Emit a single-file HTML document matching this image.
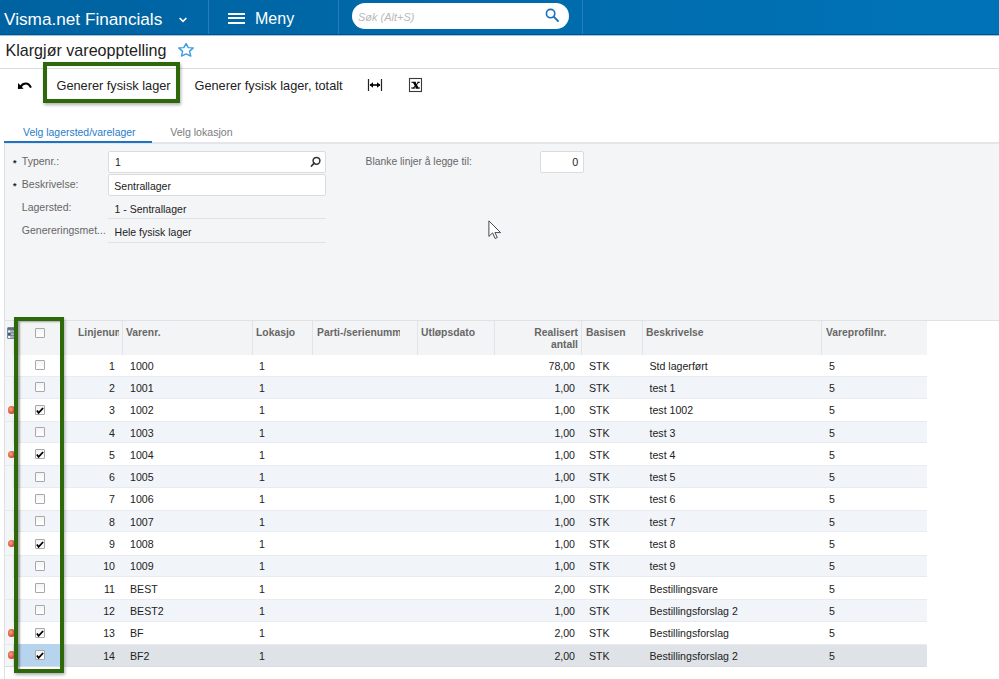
<!DOCTYPE html>
<html><head><meta charset="utf-8">
<style>
*{box-sizing:border-box;margin:0;padding:0}
html,body{width:999px;height:679px;overflow:hidden;background:#fff;font-family:"Liberation Sans",sans-serif;position:relative}
.a{position:absolute;white-space:nowrap}
#hdr{position:absolute;left:0;top:0;width:999px;height:35px;background:linear-gradient(90deg,#0062a1,#0068a7 35%,#0070b3 80%,#0073b8);border-bottom:1px solid #00528e}
.sep{position:absolute;top:0;width:1px;height:34px;background:#2a7dbd}
.t{position:absolute;white-space:nowrap;line-height:1}
</style></head><body>
<div id="hdr">
  <div class="t" style="left:4px;top:10.5px;font-size:17.2px;color:#fff">Visma.net Financials</div>
  <svg class="a" style="left:178px;top:15.7px" width="10" height="8" viewBox="0 0 10 8"><path d="M1.6 2 L5 5.4 L8.4 2" stroke="#fff" stroke-width="1.6" fill="none"/></svg>
  <div class="sep" style="left:208px"></div>
  <div class="a" style="left:228px;top:13px;width:17px;height:2px;background:#fff"></div>
  <div class="a" style="left:228px;top:17px;width:17px;height:2px;background:#fff"></div>
  <div class="a" style="left:228px;top:22px;width:17px;height:2px;background:#fff"></div>
  <div class="t" style="left:255px;top:11.3px;font-size:16px;color:#fff">Meny</div>
  <div class="sep" style="left:338px"></div>
  <div class="a" style="left:352px;top:3px;width:217px;height:26px;border-radius:13px;background:#fff"></div>
  <div class="t" style="left:358px;top:11.8px;font-size:11px;font-style:italic;color:#b9b9b9">Søk (Alt+S)</div>
  <svg class="a" style="left:545px;top:8px" width="15" height="15" viewBox="0 0 15 15"><circle cx="5.6" cy="5.6" r="4.2" stroke="#1a6fc0" stroke-width="1.6" fill="none"/><path d="M8.7 8.7 L13 13" stroke="#1a6fc0" stroke-width="1.8" stroke-linecap="round"/></svg>
  <div class="sep" style="left:582px"></div>
</div>

<div class="a" style="left:0;top:35px;width:999px;height:1px;background:#9cc3e0"></div>
<!-- title -->
<div class="t" style="left:5.5px;top:41.8px;font-size:16.1px;color:#222">Klargjør vareopptelling</div>
<svg class="a" style="left:177px;top:42px" width="18" height="16" viewBox="0 0 18 16"><path d="M9.1 1.6 L11.3 5.6 L16.2 5.9 L12.5 9.4 L13.8 14.1 L9.1 11.9 L4.5 14.1 L5.6 9.4 L1.8 5.9 L6.8 5.6 Z" stroke="#3d9de3" stroke-width="1.45" fill="none" stroke-linejoin="round"/></svg>
<div class="a" style="left:0;top:68px;width:999px;height:1px;background:#dcdcdc"></div>

<!-- toolbar -->
<svg class="a" style="left:17px;top:81px" width="16" height="10" viewBox="0 0 16 10"><path d="M1.1 1.9 L0.9 7.9 L6.6 7.7 Z" fill="#000"/><path d="M3.6 5.6 C6.5 1.6 11.5 1.2 13.9 6.6" stroke="#000" stroke-width="2.1" fill="none"/></svg>
<div class="t" style="left:56.5px;top:80.2px;font-size:12.75px;color:#222">Generer fysisk lager</div>
<div class="t" style="left:194.5px;top:80.2px;font-size:12.75px;color:#222">Generer fysisk lager, totalt</div>
<svg class="a" style="left:366px;top:78px" width="18" height="14" viewBox="0 0 18 14"><path d="M2.5 1 V13 M15.5 1 V13" stroke="#222" stroke-width="1.2"/><path d="M4 7 H14" stroke="#000" stroke-width="1.6"/><path d="M3.6 7 L7 4.2 V9.8 Z M14.4 7 L11 4.2 V9.8 Z" fill="#000"/></svg>
<svg class="a" style="left:408px;top:77px" width="16" height="16" viewBox="0 0 16 16"><rect x="1.5" y="1.5" width="12" height="13" stroke="#3a3a3a" stroke-width="1.1" fill="#fff"/><path d="M3.4 4.8 H7.8 V5.8 H3.4 Z M9.2 4.8 H11.8 V5.8 H9.2 Z M3.2 10.5 H7.4 V11.6 H3.2 Z M7.8 10.5 H12 V11.6 H7.8 Z" fill="#000"/><path d="M4.6 5 L7.4 5 L11 11.4 L8.2 11.4 Z" fill="#000"/><path d="M10.3 5 L11.5 5 L5.6 11.4 L4.3 11.4 Z" fill="#000"/></svg>
<div class="a" style="left:43px;top:62px;width:136.5px;height:40.5px;border:4px solid #2d690a;box-shadow:1px 2px 3px rgba(0,0,0,.3), inset 0 0 1px rgba(0,0,0,.2)"></div>

<!-- tabs -->
<div class="t" style="left:23px;top:127.8px;font-size:10.45px;color:#2a7cc7">Velg lagersted/varelager</div>
<div class="t" style="left:170.2px;top:127.2px;font-size:10.6px;color:#7b7b7b">Velg lokasjon</div>
<div class="a" style="left:4px;top:142px;width:995px;height:2px;background:#e3e5e8"></div>
<div class="a" style="left:4px;top:141px;width:148px;height:2px;background:#1f73c4"></div>

<!-- form panel -->
<div class="a" style="left:4px;top:144px;width:995px;height:176px;background:#f4f5f7"></div>
<div class="a" style="left:4px;top:143px;width:1px;height:536px;background:#dfe1e4"></div>

<div class="t" style="left:13px;top:158.8px;font-size:9px;color:#222;font-weight:bold">*</div>
<div class="t" style="left:21.8px;top:155.8px;font-size:10.5px;color:#666">Typenr.:</div>
<div class="t" style="left:13px;top:181.8px;font-size:9px;color:#222;font-weight:bold">*</div>
<div class="t" style="left:21.8px;top:178.8px;font-size:10.5px;color:#666">Beskrivelse:</div>
<div class="t" style="left:21.8px;top:201.8px;font-size:10.5px;color:#666">Lagersted:</div>
<div class="t" style="left:21.8px;top:224.8px;font-size:10.5px;color:#666">Genereringsmet...</div>

<div class="a" style="left:108px;top:151px;width:218px;height:22px;background:#fff;border:1px solid #dadcdf;border-radius:2px"></div>
<div class="t" style="left:115px;top:157.3px;font-size:10.5px;color:#222">1</div>
<svg class="a" style="left:310px;top:156px" width="12" height="12" viewBox="0 0 12 12"><circle cx="6.5" cy="4.8" r="3.4" stroke="#333" stroke-width="1.5" fill="none"/><path d="M4.2 7.2 L1.5 10" stroke="#333" stroke-width="1.8" stroke-linecap="round"/></svg>
<div class="a" style="left:108px;top:174px;width:218px;height:22px;background:#fff;border:1px solid #dadcdf;border-radius:2px"></div>
<div class="t" style="left:114.3px;top:181.3px;font-size:10.5px;color:#222">Sentrallager</div>
<div class="t" style="left:114.6px;top:204.3px;font-size:10.5px;color:#222">1 - Sentrallager</div>
<div class="a" style="left:108px;top:218px;width:218px;height:1px;background:#e0e2e5"></div>
<div class="t" style="left:114.6px;top:227.3px;font-size:10.5px;color:#222">Hele fysisk lager</div>
<div class="a" style="left:108px;top:242px;width:218px;height:1px;background:#e0e2e5"></div>

<div class="t" style="left:365.6px;top:156.6px;font-size:10.33px;color:#666">Blanke linjer å legge til:</div>
<div class="a" style="left:540px;top:151px;width:44px;height:22px;background:#fff;border:1px solid #dadcdf;border-radius:2px"></div>
<div class="t" style="left:572.2px;top:157px;font-size:10.8px;color:#222">0</div>

<!-- cursor -->
<svg class="a" style="left:486px;top:218px" width="18" height="24" viewBox="0 0 18 24"><path d="M2.9 2.9 L2.9 18.4 L6.6 14.9 L9.1 20.5 L11.3 19.5 L8.9 14.6 L14.6 14.6 Z" fill="#fff" stroke="#45484f" stroke-width="1" stroke-linejoin="round"/></svg>

<div id="grid">
<div class="a" style="left:4px;top:320px;width:995px;height:1px;background:#dfe1e4"></div>
<div class="a" style="left:5px;top:321px;width:922px;height:34px;background:#f3f4f6"></div>
<div class="a" style="left:122px;top:321px;width:1px;height:34px;background:#e2e4e7"></div>
<div class="a" style="left:252px;top:321px;width:1px;height:34px;background:#e2e4e7"></div>
<div class="a" style="left:312px;top:321px;width:1px;height:34px;background:#e2e4e7"></div>
<div class="a" style="left:417px;top:321px;width:1px;height:34px;background:#e2e4e7"></div>
<div class="a" style="left:494px;top:321px;width:1px;height:34px;background:#e2e4e7"></div>
<div class="a" style="left:581px;top:321px;width:1px;height:34px;background:#e2e4e7"></div>
<div class="a" style="left:642px;top:321px;width:1px;height:34px;background:#e2e4e7"></div>
<div class="a" style="left:821px;top:321px;width:1px;height:34px;background:#e2e4e7"></div>
<svg class="a" style="left:7px;top:327px" width="9" height="12" viewBox="0 0 9 12"><rect x="0" y="0" width="9" height="12" rx="1.5" fill="#7a889c"/><rect x="1" y="1" width="7" height="1.6" fill="#5d6d84"/><rect x="1.2" y="3.4" width="2.2" height="2" fill="#fff"/><rect x="1.2" y="6.2" width="2.2" height="2" fill="#3f4f66"/><rect x="1.2" y="9" width="2.2" height="2" fill="#fff"/><rect x="4" y="3.6" width="4" height="1.6" fill="#b5bfcc"/><rect x="4" y="6.4" width="4" height="1.6" fill="#b5bfcc"/><rect x="4" y="9.2" width="4" height="1.6" fill="#b5bfcc"/></svg>
<div class="a" style="left:35px;top:328.3px;width:10px;height:10px;background:linear-gradient(#f4f4f4,#fff);border:1px solid #a8a8a8;border-radius:1px"></div>
<div class="a" style="left:78px;top:328px;width:41px;overflow:hidden;font-size:10.35px;font-weight:bold;color:#676767;line-height:1;white-space:nowrap">Linjenummer</div>
<div class="t" style="left:126px;top:328px;font-size:10.35px;font-weight:bold;color:#676767">Varenr.</div>
<div class="t" style="left:256px;top:328px;font-size:10.35px;font-weight:bold;color:#676767">Lokasjo</div>
<div class="a" style="left:317px;top:328px;width:83px;overflow:hidden;font-size:10.35px;font-weight:bold;color:#676767;line-height:1;white-space:nowrap">Parti-/serienummer</div>
<div class="t" style="left:421px;top:328px;font-size:10.35px;font-weight:bold;color:#676767">Utløpsdato</div>
<div class="t" style="right:421px;top:328px;font-size:10.35px;font-weight:bold;color:#676767">Realisert</div>
<div class="t" style="right:421px;top:340.2px;font-size:10.35px;font-weight:bold;color:#676767">antall</div>
<div class="t" style="left:586px;top:328px;font-size:10.35px;font-weight:bold;color:#676767">Basisen</div>
<div class="t" style="left:646px;top:328px;font-size:10.35px;font-weight:bold;color:#676767">Beskrivelse</div>
<div class="t" style="left:826px;top:328px;font-size:10.35px;font-weight:bold;color:#676767">Vareprofilnr.</div>
<div class="a" style="left:5px;top:355px;width:922px;height:21px;background:#ffffff"></div>
<div class="a" style="left:35px;top:360.15px;width:10px;height:10px;background:linear-gradient(#f4f4f4,#fff);border:1px solid #a8a8a8;border-radius:1px"></div>
<div class="t" style="right:884px;top:360.60px;font-size:10.6px;color:#222">1</div>
<div class="t" style="left:130px;top:360.60px;font-size:10.6px;color:#222">1000</div>
<div class="t" style="left:259px;top:360.60px;font-size:10.6px;color:#222">1</div>
<div class="t" style="right:424px;top:360.60px;font-size:10.6px;color:#222">78,00</div>
<div class="t" style="left:589px;top:360.60px;font-size:10.6px;color:#222">STK</div>
<div class="t" style="left:649.5px;top:360.60px;font-size:10.6px;color:#222">Std lagerført</div>
<div class="t" style="left:829px;top:360.60px;font-size:10.6px;color:#222">5</div>
<div class="a" style="left:5px;top:376px;width:922px;height:23px;background:#f1f4f8"></div>
<div class="a" style="left:5px;top:376px;width:922px;height:1px;background:#e8ebef"></div>
<div class="a" style="left:5px;top:398px;width:922px;height:1px;background:#e8ebef"></div>
<div class="a" style="left:35px;top:382.45px;width:10px;height:10px;background:linear-gradient(#f4f4f4,#fff);border:1px solid #a8a8a8;border-radius:1px"></div>
<div class="t" style="right:884px;top:382.90px;font-size:10.6px;color:#222">2</div>
<div class="t" style="left:130px;top:382.90px;font-size:10.6px;color:#222">1001</div>
<div class="t" style="left:259px;top:382.90px;font-size:10.6px;color:#222">1</div>
<div class="t" style="right:424px;top:382.90px;font-size:10.6px;color:#222">1,00</div>
<div class="t" style="left:589px;top:382.90px;font-size:10.6px;color:#222">STK</div>
<div class="t" style="left:649.5px;top:382.90px;font-size:10.6px;color:#222">test 1</div>
<div class="t" style="left:829px;top:382.90px;font-size:10.6px;color:#222">5</div>
<div class="a" style="left:5px;top:399px;width:922px;height:22px;background:#ffffff"></div>
<div class="a" style="left:35px;top:404.75px;width:10px;height:10px;background:linear-gradient(#f4f4f4,#fff);border:1px solid #a8a8a8;border-radius:1px"></div>
<svg class="a" style="left:35px;top:404.75px" width="10" height="10" viewBox="0 0 10 10"><path d="M1.9 5.4 L3.6 7.9 L8.1 3" stroke="#000" stroke-width="1.8" fill="none"/></svg>
<div class="t" style="right:884px;top:405.20px;font-size:10.6px;color:#222">3</div>
<div class="t" style="left:130px;top:405.20px;font-size:10.6px;color:#222">1002</div>
<div class="t" style="left:259px;top:405.20px;font-size:10.6px;color:#222">1</div>
<div class="t" style="right:424px;top:405.20px;font-size:10.6px;color:#222">1,00</div>
<div class="t" style="left:589px;top:405.20px;font-size:10.6px;color:#222">STK</div>
<div class="t" style="left:649.5px;top:405.20px;font-size:10.6px;color:#222">test 1002</div>
<div class="t" style="left:829px;top:405.20px;font-size:10.6px;color:#222">5</div>
<div class="a" style="left:5px;top:421px;width:922px;height:22px;background:#f1f4f8"></div>
<div class="a" style="left:5px;top:421px;width:922px;height:1px;background:#e8ebef"></div>
<div class="a" style="left:5px;top:442px;width:922px;height:1px;background:#e8ebef"></div>
<div class="a" style="left:35px;top:427.05px;width:10px;height:10px;background:linear-gradient(#f4f4f4,#fff);border:1px solid #a8a8a8;border-radius:1px"></div>
<div class="t" style="right:884px;top:427.50px;font-size:10.6px;color:#222">4</div>
<div class="t" style="left:130px;top:427.50px;font-size:10.6px;color:#222">1003</div>
<div class="t" style="left:259px;top:427.50px;font-size:10.6px;color:#222">1</div>
<div class="t" style="right:424px;top:427.50px;font-size:10.6px;color:#222">1,00</div>
<div class="t" style="left:589px;top:427.50px;font-size:10.6px;color:#222">STK</div>
<div class="t" style="left:649.5px;top:427.50px;font-size:10.6px;color:#222">test 3</div>
<div class="t" style="left:829px;top:427.50px;font-size:10.6px;color:#222">5</div>
<div class="a" style="left:5px;top:443px;width:922px;height:22px;background:#ffffff"></div>
<div class="a" style="left:35px;top:449.35px;width:10px;height:10px;background:linear-gradient(#f4f4f4,#fff);border:1px solid #a8a8a8;border-radius:1px"></div>
<svg class="a" style="left:35px;top:449.35px" width="10" height="10" viewBox="0 0 10 10"><path d="M1.9 5.4 L3.6 7.9 L8.1 3" stroke="#000" stroke-width="1.8" fill="none"/></svg>
<div class="t" style="right:884px;top:449.80px;font-size:10.6px;color:#222">5</div>
<div class="t" style="left:130px;top:449.80px;font-size:10.6px;color:#222">1004</div>
<div class="t" style="left:259px;top:449.80px;font-size:10.6px;color:#222">1</div>
<div class="t" style="right:424px;top:449.80px;font-size:10.6px;color:#222">1,00</div>
<div class="t" style="left:589px;top:449.80px;font-size:10.6px;color:#222">STK</div>
<div class="t" style="left:649.5px;top:449.80px;font-size:10.6px;color:#222">test 4</div>
<div class="t" style="left:829px;top:449.80px;font-size:10.6px;color:#222">5</div>
<div class="a" style="left:5px;top:465px;width:922px;height:23px;background:#f1f4f8"></div>
<div class="a" style="left:5px;top:465px;width:922px;height:1px;background:#e8ebef"></div>
<div class="a" style="left:5px;top:487px;width:922px;height:1px;background:#e8ebef"></div>
<div class="a" style="left:35px;top:471.65px;width:10px;height:10px;background:linear-gradient(#f4f4f4,#fff);border:1px solid #a8a8a8;border-radius:1px"></div>
<div class="t" style="right:884px;top:472.10px;font-size:10.6px;color:#222">6</div>
<div class="t" style="left:130px;top:472.10px;font-size:10.6px;color:#222">1005</div>
<div class="t" style="left:259px;top:472.10px;font-size:10.6px;color:#222">1</div>
<div class="t" style="right:424px;top:472.10px;font-size:10.6px;color:#222">1,00</div>
<div class="t" style="left:589px;top:472.10px;font-size:10.6px;color:#222">STK</div>
<div class="t" style="left:649.5px;top:472.10px;font-size:10.6px;color:#222">test 5</div>
<div class="t" style="left:829px;top:472.10px;font-size:10.6px;color:#222">5</div>
<div class="a" style="left:5px;top:488px;width:922px;height:22px;background:#ffffff"></div>
<div class="a" style="left:35px;top:493.95px;width:10px;height:10px;background:linear-gradient(#f4f4f4,#fff);border:1px solid #a8a8a8;border-radius:1px"></div>
<div class="t" style="right:884px;top:494.40px;font-size:10.6px;color:#222">7</div>
<div class="t" style="left:130px;top:494.40px;font-size:10.6px;color:#222">1006</div>
<div class="t" style="left:259px;top:494.40px;font-size:10.6px;color:#222">1</div>
<div class="t" style="right:424px;top:494.40px;font-size:10.6px;color:#222">1,00</div>
<div class="t" style="left:589px;top:494.40px;font-size:10.6px;color:#222">STK</div>
<div class="t" style="left:649.5px;top:494.40px;font-size:10.6px;color:#222">test 6</div>
<div class="t" style="left:829px;top:494.40px;font-size:10.6px;color:#222">5</div>
<div class="a" style="left:5px;top:510px;width:922px;height:22px;background:#f1f4f8"></div>
<div class="a" style="left:5px;top:510px;width:922px;height:1px;background:#e8ebef"></div>
<div class="a" style="left:5px;top:531px;width:922px;height:1px;background:#e8ebef"></div>
<div class="a" style="left:35px;top:516.25px;width:10px;height:10px;background:linear-gradient(#f4f4f4,#fff);border:1px solid #a8a8a8;border-radius:1px"></div>
<div class="t" style="right:884px;top:516.70px;font-size:10.6px;color:#222">8</div>
<div class="t" style="left:130px;top:516.70px;font-size:10.6px;color:#222">1007</div>
<div class="t" style="left:259px;top:516.70px;font-size:10.6px;color:#222">1</div>
<div class="t" style="right:424px;top:516.70px;font-size:10.6px;color:#222">1,00</div>
<div class="t" style="left:589px;top:516.70px;font-size:10.6px;color:#222">STK</div>
<div class="t" style="left:649.5px;top:516.70px;font-size:10.6px;color:#222">test 7</div>
<div class="t" style="left:829px;top:516.70px;font-size:10.6px;color:#222">5</div>
<div class="a" style="left:5px;top:532px;width:922px;height:23px;background:#ffffff"></div>
<div class="a" style="left:35px;top:538.55px;width:10px;height:10px;background:linear-gradient(#f4f4f4,#fff);border:1px solid #a8a8a8;border-radius:1px"></div>
<svg class="a" style="left:35px;top:538.55px" width="10" height="10" viewBox="0 0 10 10"><path d="M1.9 5.4 L3.6 7.9 L8.1 3" stroke="#000" stroke-width="1.8" fill="none"/></svg>
<div class="t" style="right:884px;top:539.00px;font-size:10.6px;color:#222">9</div>
<div class="t" style="left:130px;top:539.00px;font-size:10.6px;color:#222">1008</div>
<div class="t" style="left:259px;top:539.00px;font-size:10.6px;color:#222">1</div>
<div class="t" style="right:424px;top:539.00px;font-size:10.6px;color:#222">1,00</div>
<div class="t" style="left:589px;top:539.00px;font-size:10.6px;color:#222">STK</div>
<div class="t" style="left:649.5px;top:539.00px;font-size:10.6px;color:#222">test 8</div>
<div class="t" style="left:829px;top:539.00px;font-size:10.6px;color:#222">5</div>
<div class="a" style="left:5px;top:555px;width:922px;height:22px;background:#f1f4f8"></div>
<div class="a" style="left:5px;top:555px;width:922px;height:1px;background:#e8ebef"></div>
<div class="a" style="left:5px;top:576px;width:922px;height:1px;background:#e8ebef"></div>
<div class="a" style="left:35px;top:560.85px;width:10px;height:10px;background:linear-gradient(#f4f4f4,#fff);border:1px solid #a8a8a8;border-radius:1px"></div>
<div class="t" style="right:884px;top:561.30px;font-size:10.6px;color:#222">10</div>
<div class="t" style="left:130px;top:561.30px;font-size:10.6px;color:#222">1009</div>
<div class="t" style="left:259px;top:561.30px;font-size:10.6px;color:#222">1</div>
<div class="t" style="right:424px;top:561.30px;font-size:10.6px;color:#222">1,00</div>
<div class="t" style="left:589px;top:561.30px;font-size:10.6px;color:#222">STK</div>
<div class="t" style="left:649.5px;top:561.30px;font-size:10.6px;color:#222">test 9</div>
<div class="t" style="left:829px;top:561.30px;font-size:10.6px;color:#222">5</div>
<div class="a" style="left:5px;top:577px;width:922px;height:22px;background:#ffffff"></div>
<div class="a" style="left:35px;top:583.15px;width:10px;height:10px;background:linear-gradient(#f4f4f4,#fff);border:1px solid #a8a8a8;border-radius:1px"></div>
<div class="t" style="right:884px;top:583.60px;font-size:10.6px;color:#222">11</div>
<div class="t" style="left:130px;top:583.60px;font-size:10.6px;color:#222">BEST</div>
<div class="t" style="left:259px;top:583.60px;font-size:10.6px;color:#222">1</div>
<div class="t" style="right:424px;top:583.60px;font-size:10.6px;color:#222">2,00</div>
<div class="t" style="left:589px;top:583.60px;font-size:10.6px;color:#222">STK</div>
<div class="t" style="left:649.5px;top:583.60px;font-size:10.6px;color:#222">Bestillingsvare</div>
<div class="t" style="left:829px;top:583.60px;font-size:10.6px;color:#222">5</div>
<div class="a" style="left:5px;top:599px;width:922px;height:23px;background:#f1f4f8"></div>
<div class="a" style="left:5px;top:599px;width:922px;height:1px;background:#e8ebef"></div>
<div class="a" style="left:5px;top:621px;width:922px;height:1px;background:#e8ebef"></div>
<div class="a" style="left:35px;top:605.45px;width:10px;height:10px;background:linear-gradient(#f4f4f4,#fff);border:1px solid #a8a8a8;border-radius:1px"></div>
<div class="t" style="right:884px;top:605.90px;font-size:10.6px;color:#222">12</div>
<div class="t" style="left:130px;top:605.90px;font-size:10.6px;color:#222">BEST2</div>
<div class="t" style="left:259px;top:605.90px;font-size:10.6px;color:#222">1</div>
<div class="t" style="right:424px;top:605.90px;font-size:10.6px;color:#222">1,00</div>
<div class="t" style="left:589px;top:605.90px;font-size:10.6px;color:#222">STK</div>
<div class="t" style="left:649.5px;top:605.90px;font-size:10.6px;color:#222">Bestillingsforslag 2</div>
<div class="t" style="left:829px;top:605.90px;font-size:10.6px;color:#222">5</div>
<div class="a" style="left:5px;top:622px;width:922px;height:22px;background:#ffffff"></div>
<div class="a" style="left:35px;top:627.75px;width:10px;height:10px;background:linear-gradient(#f4f4f4,#fff);border:1px solid #a8a8a8;border-radius:1px"></div>
<svg class="a" style="left:35px;top:627.75px" width="10" height="10" viewBox="0 0 10 10"><path d="M1.9 5.4 L3.6 7.9 L8.1 3" stroke="#000" stroke-width="1.8" fill="none"/></svg>
<div class="t" style="right:884px;top:628.20px;font-size:10.6px;color:#222">13</div>
<div class="t" style="left:130px;top:628.20px;font-size:10.6px;color:#222">BF</div>
<div class="t" style="left:259px;top:628.20px;font-size:10.6px;color:#222">1</div>
<div class="t" style="right:424px;top:628.20px;font-size:10.6px;color:#222">2,00</div>
<div class="t" style="left:589px;top:628.20px;font-size:10.6px;color:#222">STK</div>
<div class="t" style="left:649.5px;top:628.20px;font-size:10.6px;color:#222">Bestillingsforslag</div>
<div class="t" style="left:829px;top:628.20px;font-size:10.6px;color:#222">5</div>
<div class="a" style="left:5px;top:644px;width:922px;height:23px;background:#dfe2e6"></div>
<div class="a" style="left:5px;top:644px;width:922px;height:1px;background:#e8ebef"></div>
<div class="a" style="left:5px;top:666px;width:922px;height:1px;background:#e8ebef"></div>
<div class="a" style="left:18px;top:644px;width:42px;height:23px;background:#b7d4ee"></div>
<div class="a" style="left:5px;top:666px;width:922px;height:1px;background:#d9dce1"></div>
<div class="a" style="left:35px;top:650.05px;width:10px;height:10px;background:linear-gradient(#f4f4f4,#fff);border:1px solid #a8a8a8;border-radius:1px"></div>
<svg class="a" style="left:35px;top:650.05px" width="10" height="10" viewBox="0 0 10 10"><path d="M1.9 5.4 L3.6 7.9 L8.1 3" stroke="#000" stroke-width="1.8" fill="none"/></svg>
<div class="t" style="right:884px;top:650.50px;font-size:10.6px;color:#222">14</div>
<div class="t" style="left:130px;top:650.50px;font-size:10.6px;color:#222">BF2</div>
<div class="t" style="left:259px;top:650.50px;font-size:10.6px;color:#222">1</div>
<div class="t" style="right:424px;top:650.50px;font-size:10.6px;color:#222">2,00</div>
<div class="t" style="left:589px;top:650.50px;font-size:10.6px;color:#222">STK</div>
<div class="t" style="left:649.5px;top:650.50px;font-size:10.6px;color:#222">Bestillingsforslag 2</div>
<div class="t" style="left:829px;top:650.50px;font-size:10.6px;color:#222">5</div>
<div class="a" style="left:5px;top:354.0px;width:8px;height:312.20px;background:#f3f5f7"></div>
<div class="a" style="left:5px;top:376.00px;width:8px;height:1px;background:#e6e9ee"></div>
<div class="a" style="left:7.5px;top:406.15px;width:7.5px;height:7.5px;border-radius:50%;background:radial-gradient(circle at 40% 40%,#f5a387,#d8543a 60%,#b13f28)"></div>
<div class="a" style="left:5px;top:421.00px;width:8px;height:1px;background:#e6e9ee"></div>
<div class="a" style="left:7.5px;top:450.75px;width:7.5px;height:7.5px;border-radius:50%;background:radial-gradient(circle at 40% 40%,#f5a387,#d8543a 60%,#b13f28)"></div>
<div class="a" style="left:5px;top:465.00px;width:8px;height:1px;background:#e6e9ee"></div>
<div class="a" style="left:5px;top:510.00px;width:8px;height:1px;background:#e6e9ee"></div>
<div class="a" style="left:7.5px;top:539.95px;width:7.5px;height:7.5px;border-radius:50%;background:radial-gradient(circle at 40% 40%,#f5a387,#d8543a 60%,#b13f28)"></div>
<div class="a" style="left:5px;top:555.00px;width:8px;height:1px;background:#e6e9ee"></div>
<div class="a" style="left:5px;top:599.00px;width:8px;height:1px;background:#e6e9ee"></div>
<div class="a" style="left:7.5px;top:629.15px;width:7.5px;height:7.5px;border-radius:50%;background:radial-gradient(circle at 40% 40%,#f5a387,#d8543a 60%,#b13f28)"></div>
<div class="a" style="left:5px;top:644.00px;width:8px;height:1px;background:#e6e9ee"></div>
<div class="a" style="left:7.5px;top:651.45px;width:7.5px;height:7.5px;border-radius:50%;background:radial-gradient(circle at 40% 40%,#f5a387,#d8543a 60%,#b13f28)"></div>
<div class="a" style="left:14px;top:317px;width:49.5px;height:355.5px;border:4px solid #2d690a;box-shadow:1px 2px 3px rgba(0,0,0,.3), inset 2px 1px 2px rgba(0,0,0,.33)"></div>
</div><!--/grid-->
</body></html>
